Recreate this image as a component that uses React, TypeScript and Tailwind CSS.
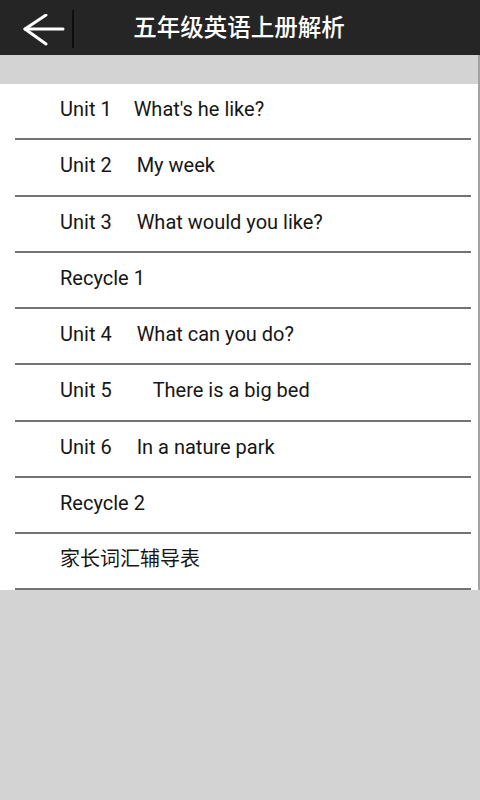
import React from 'react';

const rows: { label: string; title?: string; gap?: number }[] = [
  { label: 'Unit 1', title: "What's he like?", gap: 22 },
  { label: 'Unit 2', title: 'My week', gap: 25 },
  { label: 'Unit 3', title: 'What would you like?', gap: 25 },
  { label: 'Recycle 1' },
  { label: 'Unit 4', title: 'What can you do?', gap: 25 },
  { label: 'Unit 5', title: 'There is a big bed', gap: 41 },
  { label: 'Unit 6', title: 'In a nature park', gap: 25 },
  { label: 'Recycle 2' },
  { label: '家长词汇辅导表' },
];

const BackArrow = () => (
  <svg width="44" height="36" viewBox="0 0 44 36" fill="none" stroke="white" strokeWidth="3" strokeLinecap="round" strokeLinejoin="round">
    <path d="M40 15H2" />
    <path d="M23 1L2 15l21 15" />
  </svg>
);

export default function App() {
  return (
    <div
      className="w-[480px] h-[800px] bg-[#d3d3d3] flex flex-col"
      style={{ fontFamily: 'Roboto, "Noto Sans CJK SC", sans-serif' }}
    >
      {/* Header */}
      <div className="h-[55px] bg-[#252525] relative flex items-center justify-center">
        <div className="absolute left-[23px] top-[14px]">
          <BackArrow />
        </div>
        <div className="absolute left-[72px] top-[10px] w-[2px] h-[38px] bg-[#0e0e0e]" />
        <span className="text-white text-[23.5px] font-medium leading-none pt-[2px] pr-[2px]">
          五年级英语上册解析
        </span>
      </div>

      <div className="border-r-2 border-[#a3a3a3] w-[480px]">
        <div className="h-[29px] bg-[#d3d3d3]" />
        <div className="bg-white">
          {rows.map((r) => (
            <div key={r.label} className="h-[56.25px] flex flex-col">
              <div className="flex-1 flex items-center pl-[60px] pb-[4px] text-[20px] text-[#161616]">
                <span>{r.label}</span>
                {r.title && <span style={{ marginLeft: r.gap }}>{r.title}</span>}
              </div>
              <div className="ml-[15px] w-[456px] h-[2px] bg-[#737373]" />
            </div>
          ))}
        </div>
      </div>
    </div>
  );
}
